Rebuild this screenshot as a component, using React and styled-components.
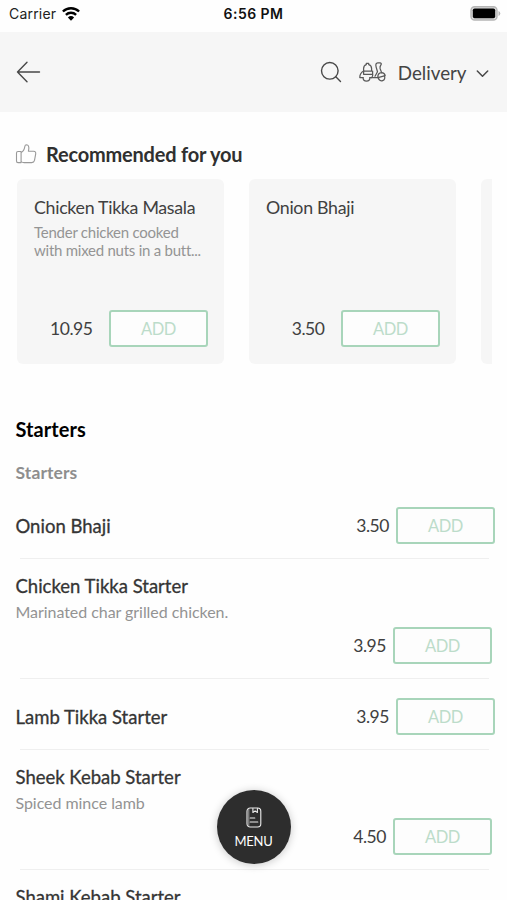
import React from "react";
import styled, { createGlobalStyle } from "styled-components";

const GlobalStyle = createGlobalStyle`
  * { box-sizing: border-box; }
  html, body { margin: 0; background: #fff; }
  body { overflow: hidden; }
`;

const Screen = styled.div`
  position: relative;
  width: 507px;
  height: 900px;
  overflow: hidden;
  background: #fefefe;
  color: #383838;
  font-family: Lato, sans-serif;
`;

const StatusBar = styled.div`
  display: grid;
  grid-template-columns: 1fr auto 1fr;
  align-items: center;
  height: 32px;
  padding: 0 6px 5px 9px;
  font: 400 14px/18px Inter, sans-serif;
  color: #222;
`;

const Carrier = styled.div`
  display: flex;
  align-items: center;
  gap: 6px;
  letter-spacing: 0.2px;
`;

const Clock = styled.div`
  margin-right: 3px;
  font-weight: 600;
  letter-spacing: 0.45px;
  color: #111;
`;

const BatterySlot = styled.div`
  display: flex;
  justify-content: flex-end;
`;

const Header = styled.header`
  display: flex;
  align-items: center;
  height: 80px;
  padding: 0 18px 0 16px;
  background: #f6f6f6;
`;

const HeaderActions = styled.div`
  display: flex;
  align-items: center;
  margin-left: auto;
`;

const Mode = styled.span`
  margin: 2px 9.5px 0 12px;
  font-size: 18.8px;
  line-height: 24px;
  color: #444;
  letter-spacing: -0.03px;
`;

const SearchSlot = styled.span`
  display: flex;
  margin-right: 17px;
`;

const SectionHead = styled.div`
  display: flex;
  align-items: center;
  gap: 9px;
  height: 26px;
  margin: 29px 0 12px 15px;
`;

const SectionTitle = styled.h2`
  margin: 0;
  font-size: 20px;
  font-weight: 700;
  line-height: 26px;
  color: #303030;
  white-space: nowrap;
  letter-spacing: -0.21px;
`;

const Carousel = styled.div`
  display: flex;
  gap: 25px;
  width: 475px;
  margin-left: 17px;
  overflow: hidden;
`;

const Card = styled.article`
  display: flex;
  flex: 0 0 207px;
  flex-direction: column;
  height: 185px;
  padding: 16px 16px 17px 17px;
  border-radius: 6px;
  background: #f6f6f6;
`;

const CardName = styled.div`
  font-size: 17.8px;
  line-height: 24px;
  white-space: nowrap;
  color: #404040;
  letter-spacing: -0.3px;
`;

const CardNote = styled.div`
  margin-top: 4px;
  font-size: 15px;
  line-height: 18px;
  white-space: pre;
  color: #949494;
  letter-spacing: -0.25px;
`;

const Purchase = styled.div`
  display: flex;
  align-items: center;
  gap: ${(p) => p.$gap}px;
  margin-top: ${(p) => (p.$inline ? "0" : "auto")};
  margin-left: auto;
`;

const Price = styled.span`
  font-size: 17.5px;
  line-height: 24px;
  color: #404040;
  letter-spacing: -0.45px;
`;

const AddButton = styled.button`
  width: 99px;
  height: 37px;
  padding: 0;
  border: 2px solid #a8d5ba;
  border-radius: 3px;
  background: #fdfdfd;
  color: #bcdcca;
  font: 400 16.5px/24px Lato, sans-serif;
  letter-spacing: -0.4px;
`;

const MenuTitle = styled.h2`
  margin: 52px 0 0 15.5px;
  font-size: 20px;
  font-weight: 700;
  line-height: 26px;
  color: #000;
  letter-spacing: 0.05px;
`;

const MenuSubtitle = styled.h3`
  margin: 19px 0 3px 15.5px;
  font-size: 17.5px;
  font-weight: 700;
  line-height: 24px;
  color: #8e8e8e;
  letter-spacing: 0.1px;
`;

const Item = styled.div`
  display: flex;
  flex-direction: ${(p) => (p.$detailed ? "column" : "row")};
  align-items: ${(p) => (p.$detailed ? "stretch" : "center")};
  height: ${(p) => (p.$detailed ? 119.5 : 69.5)}px;
  padding: ${(p) => (p.$detailed ? "15px 15px 14px 15.5px" : "5.5px 12px 0 15.5px")};
`;

const Divider = styled.div`
  height: 1px;
  margin: 0 18px 0 20px;
  background: #efefef;
`;

const ItemName = styled.div`
  font-size: 18.5px;
  line-height: 24px;
  color: #353535;
  white-space: nowrap;
  -webkit-text-stroke: 0.3px #353535;
`;

const ItemNote = styled.div`
  margin-top: 3px;
  font-size: 16px;
  line-height: 22px;
  color: #939393;
  letter-spacing: -0.05px;
`;

const MenuFab = styled.button`
  position: absolute;
  left: 217px;
  top: 790px;
  display: flex;
  flex-direction: column;
  align-items: center;
  gap: 4px;
  width: 74px;
  height: 74px;
  padding: 17px 1px 0 0;
  border: 0;
  border-radius: 50%;
  background: #2d2d2d;
  box-shadow: 0 1px 8px rgba(0, 0, 0, 0.22);
  color: #fff;
  font: 400 13px/18px Lato, sans-serif;
  letter-spacing: -0.3px;
`;

const WifiIcon = () => (
  <svg width="18" height="14" viewBox="0 0 18 14" fill="none" stroke="#000" strokeWidth="2.4">
    <path d="M.9 4.5a11.7 11.7 0 0 1 16.2 0" />
    <path d="M3.9 7.8a7.4 7.4 0 0 1 10.2 0" />
    <path d="M9 13.7 5.9 10.4a4.5 4.5 0 0 1 6.2 0Z" fill="#000" stroke="none" />
  </svg>
);

const BatteryIcon = () => (
  <svg width="31" height="15" viewBox="0 0 31 15">
    <rect x="1" y=".8" width="26" height="13.2" rx="3.6" fill="#ddd" stroke="#b5b5b5" strokeWidth="1.4" />
    <rect x="2.8" y="2.5" width="22.4" height="9.8" rx="1.8" fill="#000" />
    <path d="M28.5 5v5q1.8-.8 1.8-2.5T28.5 5Z" fill="#b5b5b5" />
  </svg>
);

const BackIcon = () => (
  <svg width="25" height="22" viewBox="0 0 25 22" fill="none" stroke="#484848" strokeWidth="1.4" strokeLinecap="round" strokeLinejoin="round">
    <path d="M1.5 11h22M11 1.3 1.5 11l9.5 9.7" />
  </svg>
);

const SearchIcon = () => (
  <svg width="22" height="22" viewBox="0 0 22 22" fill="none" stroke="#484848" strokeWidth="1.4" strokeLinecap="round">
    <circle cx="9.8" cy="9.8" r="8.3" />
    <path d="m15.8 15.8 4.7 4.7" />
  </svg>
);

const ScooterIcon = () => (
  <svg width="27" height="20" viewBox="0 0 27 20" fill="none" stroke="#5a5a5a" strokeWidth="1.25" strokeLinecap="round" strokeLinejoin="round">
    <path d="M4.6 9V6.4Q4.8 3.2 7.3 2.6V1.4h2.4v1.2q2.7.6 2.9 3.8V9Z" />
    <path d="M4.6 9v3.3h9V9" />
    <path d="M4.6 9Q.8 11 .8 15.6h3.3M13.6 12.3q.6 2-1.1 3.4h-1.6" />
    <path d="M12.6 15.7h6.6M16 14.2l2.5-4.4-1.3-4.4Q16 1 18.8.8h2.4q1.8.4.6 2.4-1.1 1.6-.7 3.3l1.5 4.1" />
    <path d="M18.8 15.7q-.2-4.8 3.8-5.1 3 .2 3.6 3.1L19 15.7" />
    <path d="M4.1 15.7a3.4 3.4 0 0 0 6.8 0M19.4 15.9a3.2 3.2 0 1 0 5.9-2" />
  </svg>
);

const ChevronIcon = () => (
  <svg width="13" height="7" viewBox="0 0 13 7" overflow="visible" fill="none" stroke="#484848" strokeWidth="1.5" strokeLinecap="round" strokeLinejoin="round">
    <path d="m1.3 2 5.2 5.2L11.7 2" />
  </svg>
);

const ThumbIcon = () => (
  <svg width="22" height="20" viewBox="0 0 22 20" fill="none" stroke="#999" strokeWidth="1.1" strokeLinejoin="round">
    <path d="M6.1 7.5H3q-1.5 0-1.5 1.6v7.8q0 1.7 1.5 1.7h3.1Z" />
    <path d="M6.1 8.5q3-1.5 3.7-5.9Q10 .8 11.6.8q2.6.2 2.2 4.2l-.4 2.2h5.3q2.4.2 2 2.7l-1.2 6.5q-.5 2.2-2.8 2.2H9q-1.5 0-2.9-1" />
  </svg>
);

const MenuIcon = () => (
  <svg width="16" height="21" viewBox="0 0 16 21" fill="none" stroke="#eee" strokeWidth="1.1" strokeLinejoin="round" strokeLinecap="round">
    <rect x="1" y="1" width="13.8" height="19" rx="3.2" />
    <path d="M6.9 1.5v4l2.2-1.6 2.3 1.6v-4M4.2 11h4.6M4.2 15h7.6" />
    <path d="M2.8 2.5v16" strokeWidth=".6" />
  </svg>
);

const recommended = [
  { name: "Chicken Tikka Masala", note: "Tender chicken cooked\nwith mixed nuts in a butt...", price: "10.95" },
  { name: "Onion Bhaji", price: "3.50" },
];

const starters = [
  { name: "Onion Bhaji", price: "3.50" },
  { name: "Chicken Tikka Starter", note: "Marinated char grilled chicken.", price: "3.95" },
  { name: "Lamb Tikka Starter", price: "3.95" },
  { name: "Sheek Kebab Starter", note: "Spiced mince lamb", price: "4.50" },
  { name: "Shami Kebab Starter" },
];

function PurchaseControls({ price, gap, inline }) {
  return (
    <Purchase $gap={gap} $inline={inline}>
      <Price>{price}</Price>
      <AddButton>ADD</AddButton>
    </Purchase>
  );
}

export default function App() {
  return (
    <Screen>
      <GlobalStyle />
      <StatusBar>
        <Carrier>Carrier <WifiIcon /></Carrier>
        <Clock>6:56 PM</Clock>
        <BatterySlot><BatteryIcon /></BatterySlot>
      </StatusBar>
      <Header>
        <BackIcon />
        <HeaderActions>
          <SearchSlot><SearchIcon /></SearchSlot>
          <ScooterIcon />
          <Mode>Delivery</Mode>
          <ChevronIcon />
        </HeaderActions>
      </Header>
      <SectionHead>
        <ThumbIcon />
        <SectionTitle>Recommended for you</SectionTitle>
      </SectionHead>
      <Carousel>
        {recommended.map((dish) => (
          <Card key={dish.name}>
            <CardName>{dish.name}</CardName>
            {dish.note && <CardNote>{dish.note}</CardNote>}
            <PurchaseControls price={dish.price} gap={16.5} />
          </Card>
        ))}
        <Card />
      </Carousel>
      <MenuTitle>Starters</MenuTitle>
      <MenuSubtitle>Starters</MenuSubtitle>
      {starters.map((dish) => (
        <React.Fragment key={dish.name}>
          <Item $detailed={Boolean(dish.note) || !dish.price}>
            <ItemName>{dish.name}</ItemName>
            {dish.note && <ItemNote>{dish.note}</ItemNote>}
            {dish.price && <PurchaseControls price={dish.price} gap={7} inline={!dish.note} />}
          </Item>
          <Divider />
        </React.Fragment>
      ))}
      <MenuFab><MenuIcon />MENU</MenuFab>
    </Screen>
  );
}
